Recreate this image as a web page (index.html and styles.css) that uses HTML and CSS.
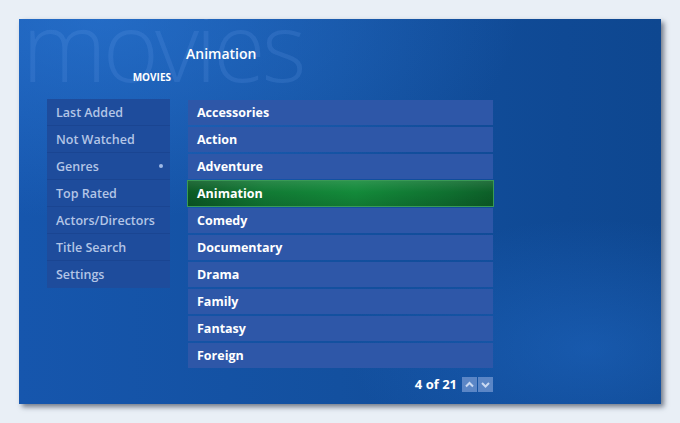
FILE: index.html
```html
<!DOCTYPE html>
<html>
<head>
<meta charset="utf-8">
<link rel="stylesheet" href="styles.css">
</head>
<body>
<div class="screen">
  <div class="watermark">movies</div>
  <header class="head">
    <div class="section">MOVIES</div>
    <div class="title">Animation</div>
  </header>
  <div class="body">
    <nav class="menu">
      <div class="mitem">Last Added</div>
      <div class="mitem">Not Watched</div>
      <div class="mitem active">Genres<span class="dot"></span></div>
      <div class="mitem">Top Rated</div>
      <div class="mitem">Actors/Directors</div>
      <div class="mitem">Title Search</div>
      <div class="mitem">Settings</div>
    </nav>
    <div class="listcol">
      <ul class="list">
        <li class="row">Accessories</li>
        <li class="row">Action</li>
        <li class="row">Adventure</li>
        <li class="row selected">Animation</li>
        <li class="row">Comedy</li>
        <li class="row">Documentary</li>
        <li class="row">Drama</li>
        <li class="row">Family</li>
        <li class="row">Fantasy</li>
        <li class="row">Foreign</li>
      </ul>
      <div class="pager">
        <span class="count">4 of 21</span>
        <span class="arrow"><svg width="15" height="15" viewBox="0 0 15 15"><path d="M4 9.5 L7.5 6 L11 9.5" fill="none" stroke="#c9d9f2" stroke-width="2"/></svg></span>
        <span class="arrow"><svg width="15" height="15" viewBox="0 0 15 15"><path d="M4 6 L7.5 9.5 L11 6" fill="none" stroke="#c9d9f2" stroke-width="2"/></svg></span>
      </div>
    </div>
  </div>
</div>
</body>
</html>
```
FILE: styles.css
```css
html, body {
  margin: 0;
  padding: 0;
}
body {
  background: #e9eff6;
  width: 680px;
  height: 423px;
  overflow: hidden;
  font-family: "Open Sans", "Liberation Sans", sans-serif;
}
.screen {
  position: relative;
  margin: 19px 0 0 19px;
  width: 642px;
  height: 385px;
  box-sizing: border-box;
  overflow: hidden;
  background:
    radial-gradient(ellipse 240px 130px at 570px 330px, rgba(40,120,220,0.35), rgba(40,120,220,0) 100%),
    radial-gradient(ellipse 420px 200px at 80px 0px, rgba(50,130,225,0.5), rgba(50,130,225,0) 100%),
    linear-gradient(to right, #1656ad 0%, #13509f 50%, #0f4994 85%, #0e4790 100%);
  box-shadow: 3px 3px 5px rgba(20,30,50,0.55);
}
.watermark {
  position: absolute;
  left: 3px;
  top: 0;
  font-family: "Open Sans", sans-serif;
  font-weight: 300;
  font-size: 96px;
  letter-spacing: -4px;
  color: rgba(120,170,240,0.16);
  line-height: 52px;
  pointer-events: none;
}
.head {
  position: relative;
  height: 81px;
}
.title {
  position: absolute;
  left: 167px;
  top: 25px;
  font-size: 14px;
  font-weight: 600;
  color: #ffffff;
}
.section {
  position: absolute;
  right: calc(642px - 152px);
  top: 51px;
  font-size: 10px;
  font-weight: 700;
  color: #ffffff;
}
.body {
  display: flex;
  gap: 18px;
  padding-left: 28px;
}
.menu {
  width: 123px;
  height: 189px;
  margin-top: -1px;
  background: #1e4c9c;
  display: flex;
  flex-direction: column;
}
.mitem {
  height: 26px;
  border-bottom: 1px solid #1a4592;
  box-sizing: content-box;
  padding-left: 9px;
  display: flex;
  align-items: center;
  justify-content: space-between;
  padding-right: 7px;
  font-size: 12.5px;
  font-weight: 600;
  color: #b3c5e6;
}
.mitem:last-child { border-bottom: none; }
.dot {
  width: 4px;
  height: 4px;
  border-radius: 50%;
  background: #9fb9e6;
}
.listcol {
  width: 305px;
  display: flex;
  flex-direction: column;
}
.list {
  list-style: none;
  margin: 0;
  padding: 0;
  display: flex;
  flex-direction: column;
  gap: 2px;
}
.row {
  height: 25px;
  background: #2e57a8;
  padding-left: 9px;
  display: flex;
  align-items: center;
  font-size: 12.5px;
  font-weight: 700;
  color: #ffffff;
}
.row.selected {
  margin: -1px -1px;
  height: 27px;
  padding-left: 9px;
  border: 1px solid #3a9a55;
  box-sizing: border-box;
  background:
    linear-gradient(to bottom, rgba(255,255,255,0.10), rgba(255,255,255,0) 45%, rgba(0,0,0,0.12)),
    linear-gradient(to right, #0b5a25 0%, #117a34 25%, #138a3a 55%, #0f7030 85%, #0c5f28 100%);
}
.pager {
  display: flex;
  justify-content: flex-end;
  align-items: center;
  margin-top: 7px;
  gap: 1px;
}
.count {
  font-size: 13px;
  font-weight: 700;
  color: #ffffff;
  margin-right: 4px;
}
.arrow {
  width: 15px;
  height: 15px;
  background: #5b86c6;
  display: flex;
}
```
